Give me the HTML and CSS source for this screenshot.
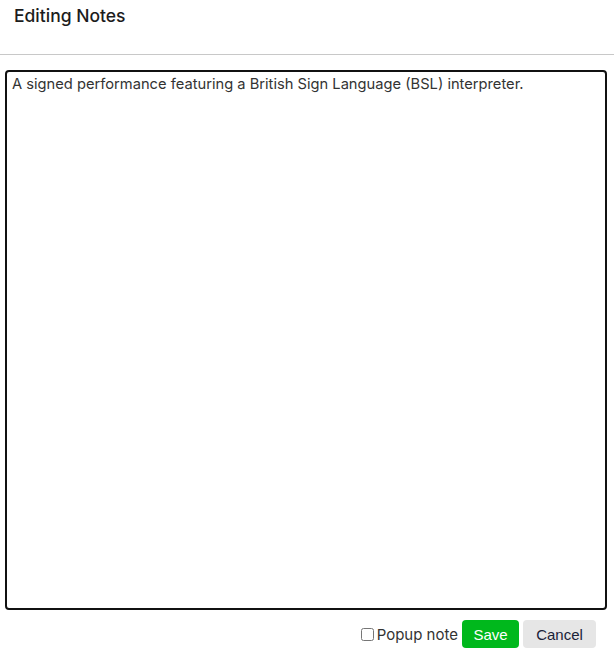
FILE: index.html
```html
<!DOCTYPE html>
<html lang="en">
<head>
<meta charset="utf-8">
<title>Editing Notes</title>
<link rel="stylesheet" href="styles.css">
</head>
<body>
<div class="dialog">
  <header class="dialog-header">
    <h1 class="dialog-title">Editing Notes</h1>
  </header>
  <div class="dialog-body">
    <textarea class="notes">A signed performance featuring a British Sign Language (BSL) interpreter.</textarea>
  </div>
  <footer class="dialog-footer">
    <label class="popup"><input type="checkbox" class="popup-check">Popup note</label>
    <button class="btn btn-save">Save</button>
    <button class="btn btn-cancel">Cancel</button>
  </footer>
</div>
</body>
</html>
```
FILE: styles.css
```css
html, body {
  margin: 0;
  padding: 0;
  background: #ffffff;
}
body {
  font-family: "Inter", "Liberation Sans", sans-serif;
  color: #222;
}
.dialog {
  width: 614px;
}
.dialog-header {
  height: 55px;
  border-bottom: 1px solid #c8c8c8;
  padding: 6px 14px 0;
  box-sizing: border-box;
}
.dialog-title {
  margin: 0;
  font-size: 17.5px;
  font-weight: 500;
  line-height: 20px;
  color: #1c1c1c;
}
.dialog-body {
  padding: 15px 7px 0 5px;
}
.notes {
  display: block;
  width: 602px;
  height: 540px;
  box-sizing: border-box;
  border: 2px solid #111;
  border-radius: 4px;
  padding: 2px 5px;
  margin: 0;
  resize: none;
  font-family: "Inter", "Liberation Sans", sans-serif;
  font-size: 14.7px;
  line-height: 20px;
  color: #333;
  outline: none;
}
.dialog-footer {
  display: flex;
  justify-content: flex-end;
  align-items: center;
  gap: 4px;
  padding: 10px 18px 0 0;
}
.popup {
  display: flex;
  align-items: center;
  font-size: 15px;
  color: #333;
  font-family: "Inter", "Liberation Sans", sans-serif;
}
.popup-check {
  width: 13px;
  height: 13px;
  margin: 0 3px 0 0;
}
.btn {
  height: 28px;
  border: none;
  border-radius: 4px;
  font-family: "Liberation Sans", sans-serif;
  font-size: 15px;
  padding: 0;
}
.btn-save {
  background: #00b81c;
  color: #fff;
  width: 57px;
}
.btn-cancel {
  background: #e6e6e6;
  color: #1a2238;
  width: 73px;
}
```
